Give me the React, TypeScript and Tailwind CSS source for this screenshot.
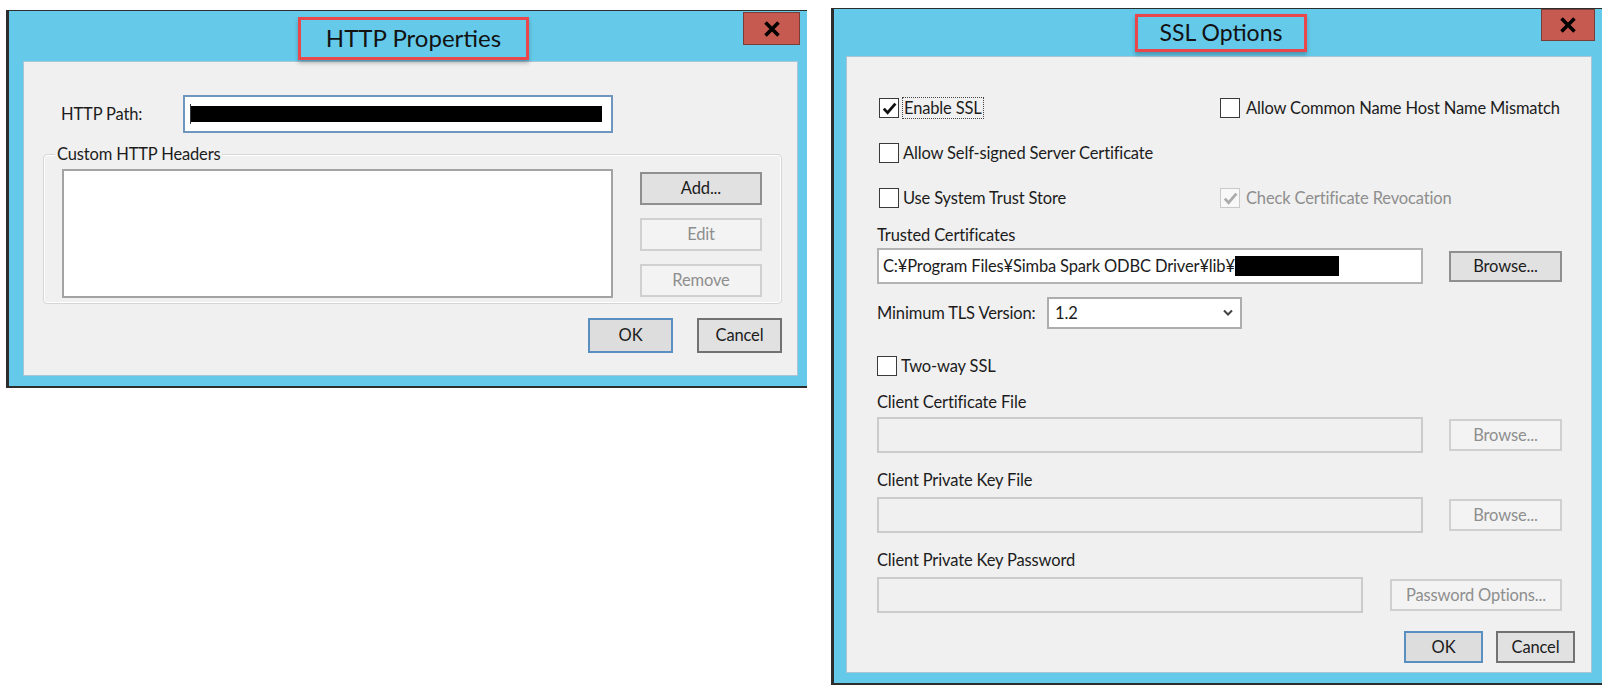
import React from "react";

const font = "font-['Lato',sans-serif]";

const label = "text-[16.5px] tracking-[-0.15px] leading-[20px] text-[#1c1c1c] whitespace-nowrap";
const btnBase = "flex items-center justify-center text-[16.5px] tracking-[-0.15px] leading-none whitespace-nowrap";
const btnNormal = "bg-[#e1e1e1] border-2 border-[#8f8f8f] text-[#1c1c1c]";
const btnDefault = "bg-[#dddddd] border-2 border-[#5a8fc2] text-[#1c1c1c]";
const btnCancel = "bg-[#e1e1e1] border-2 border-[#727272] text-[#1c1c1c]";
const btnDisabled = "bg-[#f3f3f3] border-2 border-[#d0d0d0] text-[#8e8e8e]";

function CloseX() {
  return (
    <svg width="18" height="16" viewBox="0 0 18 16">
      <path d="M2.5 1.5 L15.5 14.5 M15.5 1.5 L2.5 14.5" stroke="#000" strokeWidth="3.6" />
    </svg>
  );
}

function Check({ checked, disabled }: { checked?: boolean; disabled?: boolean }) {
  return (
    <span
      className={`w-[20px] h-[20px] shrink-0 flex items-center justify-center border ${
        disabled ? "bg-[#f8f8f8] border-[#c9c9c9]" : "bg-white border-[#3a3a3a]"
      }`}
    >
      {checked && (
        <svg width="15" height="13" viewBox="0 0 15 13">
          <path
            d="M1.8 6.6 L5.6 10.6 L13.4 1.6"
            fill="none"
            stroke={disabled ? "#ababab" : "#111"}
            strokeWidth="2.8"
          />
        </svg>
      )}
    </span>
  );
}

function Chevron() {
  return (
    <svg width="10" height="8" viewBox="0 0 10 8">
      <path d="M1 1.5 L5 5.5 L9 1.5" fill="none" stroke="#444" strokeWidth="2" />
    </svg>
  );
}

function HttpDialog() {
  return (
    <div className="mt-[10px] w-[801px] h-[378px] shrink-0 border-l-[3px] border-t border-b-2 border-[#2d2d2d] bg-[#65c9ea] flex flex-col">
      {/* title bar */}
      <div className="relative h-[50px] shrink-0 flex justify-center items-start pt-[6px] pl-[11px]">
        <div className="w-[231px] h-[43px] border-[3px] border-[#e8474c] shadow-[0_3px_4px_rgba(0,0,0,0.25)] flex items-center justify-center text-[24px] text-[#121212] pb-[2px]">
          HTTP Properties
        </div>
        <div className="absolute right-[7px] top-[1px] w-[57px] h-[33px] bg-[#c75a50] border border-[#7b3c38] flex items-center justify-center">
          <CloseX />
        </div>
      </div>

      {/* client */}
      <div className="ml-[14px] mr-[9px] h-[315px] shrink-0 bg-[#f0f0f0] border border-[#a9c6d6] flex flex-col">
        <div className="mt-[33px] ml-[37px] flex items-center h-[38px]">
          <span className={`w-[122px] ${label}`}>HTTP Path:</span>
          <div className="w-[430px] h-[38px] bg-white border-2 border-[#6e95bd] flex items-center pl-[5px]">
            <div className="w-px h-[20px] bg-[#333]" />
            <div className="w-[411px] h-[16px] bg-black" />
          </div>
        </div>

        <div className="relative mt-[21px] ml-[19px] w-[739px] h-[150px] border border-[#d6d6d6] rounded-[4px] shadow-[inset_0_0_0_1px_#ffffff] flex items-start pt-[14px] pl-[18px]">
          <span className={`absolute left-[11px] top-[-11px] px-[2px] bg-[#f0f0f0] ${label}`}>
            Custom HTTP Headers
          </span>
          <div className="w-[551px] h-[129px] bg-white border-2 border-[#a3a3a3]" />
          <div className="ml-[27px] mt-[3px] flex flex-col gap-[13px]">
            <div className={`w-[122px] h-[33px] ${btnBase} ${btnNormal}`}>Add...</div>
            <div className={`w-[122px] h-[33px] ${btnBase} ${btnDisabled}`}>Edit</div>
            <div className={`w-[122px] h-[33px] ${btnBase} ${btnDisabled}`}>Remove</div>
          </div>
        </div>

        <div className="mt-[14px] pr-[15px] flex justify-end gap-[24px]">
          <div className={`w-[85px] h-[35px] ${btnBase} ${btnDefault}`}>OK</div>
          <div className={`w-[85px] h-[35px] ${btnBase} ${btnCancel}`}>Cancel</div>
        </div>
      </div>
    </div>
  );
}

function FileRow({ inputW, btnW, btnText, gap }: { inputW: string; btnW: string; btnText: string; gap: string }) {
  return (
    <div className={`flex items-center h-[36px] ${gap}`}>
      <div className={`${inputW} h-[36px] bg-[#f0f0f0] border-2 border-[#cbcbcb]`} />
      <div className={`${btnW} h-[32px] ${btnBase} ${btnDisabled}`}>{btnText}</div>
    </div>
  );
}

function SslDialog() {
  return (
    <div className="mt-[8px] ml-[24px] w-[771px] h-[677px] shrink-0 border-l-[3px] border-t border-b-2 border-[#2d2d2d] bg-[#65c9ea] flex flex-col">
      {/* title bar */}
      <div className="relative h-[47px] shrink-0 flex justify-center items-start pt-[5px] pl-[6px]">
        <div className="w-[172px] h-[38px] border-[3px] border-[#e8474c] shadow-[0_3px_4px_rgba(0,0,0,0.25)] flex items-center justify-center text-[23px] text-[#121212] pb-[2px]">
          SSL Options
        </div>
        <div className="absolute right-[7px] top-0 w-[54px] h-[32px] bg-[#c75a50] border border-[#7b3c38] flex items-center justify-center">
          <CloseX />
        </div>
      </div>

      {/* client */}
      <div className="ml-[12px] mr-[10px] h-[617px] shrink-0 bg-[#f0f0f0] border border-[#a9c6d6] flex flex-col pl-[30px] pr-[16px]">
        <div className="mt-[41px] ml-[2px] grid grid-cols-[341px_1fr] gap-y-[25px]">
          <div className="flex items-center h-[20px]">
            <Check checked />
            <span className={`ml-[3px] h-[22px] px-px border border-dotted border-[#444] flex items-center ${label}`}>
              Enable SSL
            </span>
          </div>
          <div className="flex items-center h-[20px]">
            <Check />
            <span className={`ml-[6px] ${label}`}>Allow Common Name Host Name Mismatch</span>
          </div>
          <div className="flex items-center h-[20px]">
            <Check />
            <span className={`ml-[4px] ${label}`}>Allow Self-signed Server Certificate</span>
          </div>
          <div />
          <div className="flex items-center h-[20px]">
            <Check />
            <span className={`ml-[4px] ${label}`}>Use System Trust Store</span>
          </div>
          <div className="flex items-center h-[20px]">
            <Check checked disabled />
            <span className="ml-[6px] text-[16.5px] tracking-[-0.15px] leading-[20px] text-[#8e8e8e] whitespace-nowrap">
              Check Certificate Revocation
            </span>
          </div>
        </div>

        <div className={`mt-[17px] ${label}`}>Trusted Certificates</div>
        <div className="mt-[3px] flex items-center h-[36px] gap-[26px]">
          <div className="w-[546px] h-[36px] bg-white border-2 border-[#b3b3b3] flex items-center pl-[4px]">
            <span className={label}>C:¥Program Files¥Simba Spark ODBC Driver¥lib¥</span>
            <div className="w-[104px] h-[20px] bg-black" />
          </div>
          <div className={`w-[113px] h-[31px] ${btnBase} ${btnNormal}`}>Browse...</div>
        </div>

        <div className="mt-[13px] flex items-center h-[32px]">
          <span className={`w-[170px] ${label}`}>Minimum TLS Version:</span>
          <div className="w-[195px] h-[32px] bg-white border-2 border-[#adadad] flex items-center justify-between pl-[6px] pr-[7px]">
            <span className={label}>1.2</span>
            <Chevron />
          </div>
        </div>

        <div className="mt-[27px] flex items-center h-[20px]">
          <Check />
          <span className={`ml-[4px] ${label}`}>Two-way SSL</span>
        </div>

        <div className={`mt-[16px] ${label}`}>Client Certificate File</div>
        <div className="mt-[5px]">
          <FileRow inputW="w-[546px]" btnW="w-[113px]" btnText="Browse..." gap="gap-[26px]" />
        </div>

        <div className={`mt-[17px] ${label}`}>Client Private Key File</div>
        <div className="mt-[7px]">
          <FileRow inputW="w-[546px]" btnW="w-[113px]" btnText="Browse..." gap="gap-[26px]" />
        </div>

        <div className={`mt-[17px] ${label}`}>Client Private Key Password</div>
        <div className="mt-[7px]">
          <FileRow inputW="w-[486px]" btnW="w-[172px]" btnText="Password Options..." gap="gap-[27px]" />
        </div>

        <div className="mt-[18px] flex justify-end gap-[13px]">
          <div className={`w-[79px] h-[32px] ${btnBase} ${btnDefault}`}>OK</div>
          <div className={`w-[79px] h-[32px] ${btnBase} ${btnCancel}`}>Cancel</div>
        </div>
      </div>
    </div>
  );
}

export default function App() {
  return (
    <div className={`w-[1609px] h-[690px] bg-white flex items-start pl-[6px] ${font}`}>
      <HttpDialog />
      <SslDialog />
    </div>
  );
}
